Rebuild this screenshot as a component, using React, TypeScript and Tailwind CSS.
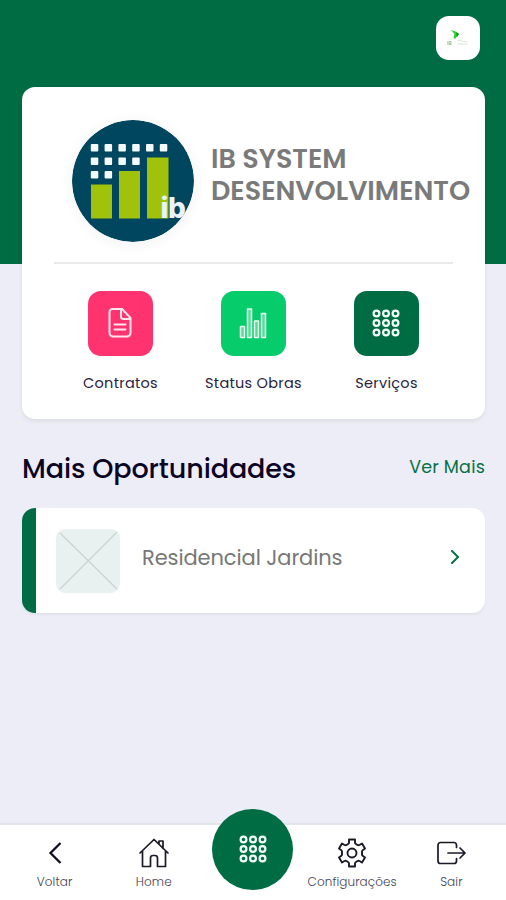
import type { ReactNode } from "react";

const font = "font-['Poppins','Inter',sans-serif]";

function DotsIcon({ className }: { className: string }) {
  return (
    <svg viewBox="0 0 28 28" className={className} fill="none" stroke="#f1fff6" strokeWidth="2.200">
      {[4.5, 14, 23.5].map((y) =>
        [4.5, 14, 23.5].map((x) => <circle key={`${x}-${y}`} cx={x} cy={y} r="2.900" />)
      )}
    </svg>
  );
}

function DocumentIcon() {
  return (
    <svg viewBox="0 0 24 30" className="h-[30px] w-6" fill="none" stroke="#ffe6ee" strokeWidth="2" strokeLinejoin="round" strokeLinecap="round">
      <path d="M4.500 1H14l8.500 9v15a3.500 3.500 0 0 1-3.500 3.500H5A3.500 3.500 0 0 1 1.500 25V4a3 3 0 0 1 3-3Z" />
      <path d="M13 1v7.500a2.500 2.500 0 0 0 2.500 2.500H22M6.500 16.500h11M6.500 21.500h11" />
    </svg>
  );
}

function BarsIcon() {
  return (
    <svg viewBox="0 0 28 31" className="h-[31px] w-7" fill="#58dc95" stroke="#e5fff0" strokeWidth="1.500" strokeLinejoin="round">
      <rect x="1.500" y="18.500" width="4" height="11" />
      <rect x="8.500" y="1" width="4" height="28.500" />
      <rect x="15.500" y="13" width="4" height="16.500" />
      <rect x="22.500" y="5.500" width="4" height="24" />
    </svg>
  );
}

function Shortcut({ color, label, children }: { color: string; label: string; children: ReactNode }) {
  return (
    <div className="flex flex-col items-center">
      <div className={`flex size-[65px] items-center justify-center rounded-[13px] pr-px pb-px ${color}`}>{children}</div>
      <div className="mt-[17px] whitespace-nowrap text-[14.5px] leading-5 tracking-[0.28px] text-[#29233f]">{label}</div>
    </div>
  );
}

function CompanyLogo() {
  const rows = [6, 4, 2];
  return (
    <svg viewBox="0 0 122 122" className="size-[122px] shrink-0 rounded-full shadow-[0_2px_10px_4px_rgba(0,0,0,0.035)]">
      <defs>
        <clipPath id="disc"><circle cx="61" cy="61" r="61" /></clipPath>
      </defs>
      <g clipPath="url(#disc)">
        <rect width="122" height="122" fill="#00465e" />
        {rows.map((n, r) =>
          Array.from({ length: n }, (_, c) => (
            <rect key={`${r}-${c}`} x={18.8 + c * 13.8} y={24 + r * 13.5} width="7.500" height="7.500" rx="1" fill="#f4fbff" />
          ))
        )}
        <path fill="#a0c20b" d="M19 64.500h21V98.500H19zM47 51h21v47.500H47zM75 37.500h21.500v61H75z" />
        <text x="88.500" y="97.500" fontFamily="Inter, sans-serif" fontWeight="800" fontSize="28" letterSpacing="-0.5" fill="#e9f4fa">ib</text>
      </g>
    </svg>
  );
}

function NavItem({ label, children }: { label: string; children: ReactNode }) {
  return (
    <div className="flex flex-col items-center pt-[12px]">
      <div className="flex h-8 items-center">{children}</div>
      <div className="mt-[5px] whitespace-nowrap text-[12px] font-light leading-4 tracking-[0.1px] text-[#454252]">{label}</div>
    </div>
  );
}

export default function App() {
  return (
    <div className={`flex h-[900px] w-[506px] flex-col overflow-hidden bg-[#ededf7] ${font}`}>
      <header className="h-[264px] shrink-0 bg-[#006c44]">
        <div className="flex justify-end pr-[26px] pt-4">
          <div className="flex size-11 items-center justify-center rounded-[13px] bg-white">
            <svg viewBox="0 0 24 20" className="h-5 w-6">
              <path d="m5 2 4.500 1.500 3.500 2.500-4 5-1.500-1.500 1-3.500z" fill="#27d62c" />
              <path d="m10 4 3 2-2 3z" fill="#079317" />
              <text x="1" y="17" fontSize="5" fontWeight="600" fill="#8faf9c">IB</text>
              <path d="M11 12l10 2M11 16h11" stroke="#dce7df" />
            </svg>
          </div>
        </div>
      </header>

      <main className="-mt-[177px] flex flex-1 flex-col pl-[22px] pr-[21px]">
        <section className="h-[332px] shrink-0 rounded-[13px] bg-white px-8 shadow-[0_2px_4px_rgba(0,0,0,0.08)]">
          <div className="flex h-[177px] items-start border-b-2 border-[#e8eaea] pl-[18px] pt-[33px]">
            <CompanyLogo />
            <h1 className="ml-[17px] mt-[23px] whitespace-nowrap text-[27px] font-semibold leading-8 text-[#7a7a7a]">
              IB SYSTEM
              <br />
              DESENVOLVIMENTO
            </h1>
          </div>
          <div className="grid grid-cols-3 pt-[27px]">
            <Shortcut color="bg-[#ff3370]" label="Contratos">
              <DocumentIcon />
            </Shortcut>
            <Shortcut color="bg-[#06cc6b]" label="Status Obras">
              <BarsIcon />
            </Shortcut>
            <Shortcut color="bg-[#006c44]" label="Serviços">
              <DotsIcon className="size-7" />
            </Shortcut>
          </div>
        </section>

        <div className="mt-[30px] flex h-10 items-center justify-between">
          <h2 className="whitespace-nowrap text-[27px] font-medium leading-10 tracking-[-0.1px] text-[#0b0424]">Mais Oportunidades</h2>
          <span className="whitespace-nowrap pb-[3px] text-[17.5px] tracking-[0.2px] text-[#087049]">Ver Mais</span>
        </div>

        <section className="mt-[19px] flex h-[105px] shrink-0 items-center overflow-hidden rounded-[13px] border-l-[14px] border-[#006c44] bg-white pl-5 pr-[25px] shadow-[0_2px_3px_rgba(0,0,0,0.05)]">
          <svg viewBox="0 0 64 64" className="size-16 rounded-[9px] bg-[#e9f1f0]" stroke="#cbd3d2" strokeWidth="1.300">
            <path d="m4 4 57 56M61 3 4 60" />
          </svg>
          <span className="ml-[22px] whitespace-nowrap pb-[6px] text-[21px] tracking-[-0.1px] text-[#777]">Residencial Jardins</span>
          <svg viewBox="0 0 10 14" className="mb-[7px] ml-auto h-3.5 w-2.5" fill="none" stroke="#087049" strokeWidth="2" strokeLinecap="round" strokeLinejoin="round">
            <path d="m2 1 6 6-6 6" />
          </svg>
        </section>
      </main>

      <nav className="grid h-[77px] shrink-0 grid-cols-5 border-t-2 border-[#e4e5eb] bg-white pl-[5px] pr-[5px]">
        <NavItem label="Voltar">
          <svg viewBox="0 0 14 24" className="h-6 w-3.5" fill="none" stroke="#120d20" strokeWidth="2.300">
            <path d="M12.500 2 2.500 12l10 10" />
          </svg>
        </NavItem>
        <NavItem label="Home">
          <svg viewBox="0 0 32 32" className="size-8" fill="none" stroke="#1b1827" strokeWidth="1.700" strokeLinejoin="round" strokeLinecap="round">
            <path d="M2 16 16 2.500 30 16M21 7V4h4v7.500M4.500 14v15.500h8V21a2.500 2.500 0 0 1 2.500-2.500h2a2.500 2.500 0 0 1 2.500 2.500v8.500h8V14" />
          </svg>
        </NavItem>
        <div className="-mt-[16px] flex size-[81px] items-center justify-center justify-self-center rounded-full bg-[#006c44] pb-px">
          <DotsIcon className="size-7" />
        </div>
        <NavItem label="Configurações">
          <svg viewBox="0 0 32 32" className="size-8" fill="none" stroke="#1b1827" strokeWidth="1.900" strokeLinejoin="round">
            <path d="M13 2.500h6v3q0 1 1 1.500l1.500 1q1 .5 2 0L26 6.500l3 5-2 1.500q-1 .5-1 1.500v3q0 1 1 1.500l2 1.500-3 5-2.500-1.500q-1-.5-2 0l-1.500 1q-1 .5-1 1.500v3h-6v-3q0-1-1-1.500l-1.500-1q-1-.5-2 0L6 25.500l-3-5L5 19q1-.5 1-1.500v-3q0-1-1-1.500l-2-1.500 3-5L8.500 8q1 .5 2 0l1.500-1q1-.5 1-1.500z" />
            <circle cx="16" cy="16" r="4.500" />
          </svg>
        </NavItem>
        <NavItem label="Sair">
          <svg viewBox="0 0 30 24" className="h-6 w-[30px]" fill="none" stroke="#1b1827" strokeWidth="1.700" strokeLinecap="round" strokeLinejoin="round">
            <path d="M20.500 6.500V4A2.500 2.500 0 0 0 18 1.500H4.500A2.500 2.500 0 0 0 2 4v16a2.500 2.500 0 0 0 2.500 2.500H18a2.500 2.500 0 0 0 2.500-2.500v-2.500M12 12h16.500M24 7l5 5-5 5" />
          </svg>
        </NavItem>
      </nav>
    </div>
  );
}
